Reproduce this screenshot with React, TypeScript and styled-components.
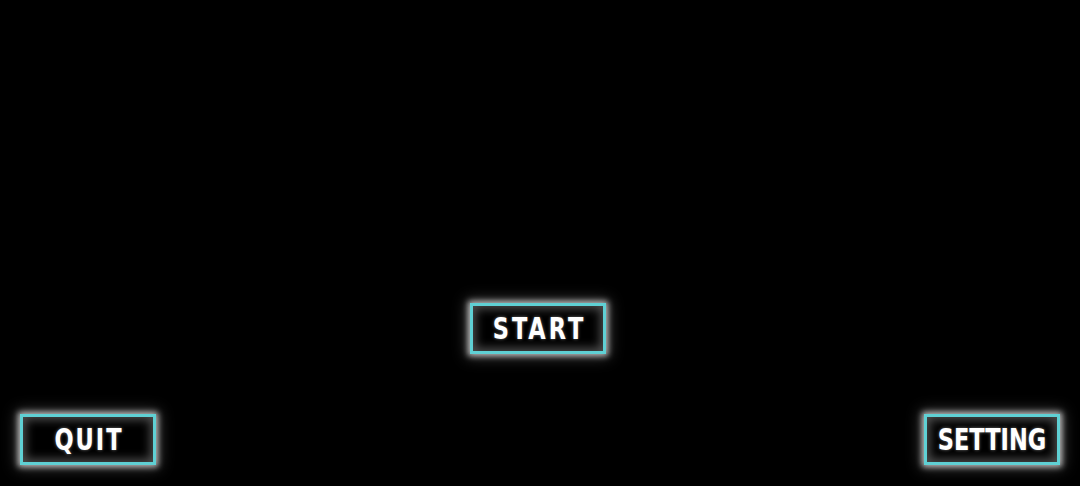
import React from "react";
import styled, { createGlobalStyle } from "styled-components";

const GlobalStyle = createGlobalStyle`
  html, body {
    margin: 0;
    padding: 0;
    background: #000000;
  }
`;

const Screen = styled.div`
  width: 100vw;
  height: 100vh;
  box-sizing: border-box;
  display: flex;
  flex-direction: column;
  justify-content: flex-end;
  gap: 60px;
  padding: 0 20px 21px;
  background: #000000;
`;

const CenterRow = styled.div`
  display: flex;
  justify-content: center;
  padding-right: 4px;
`;

const BottomRow = styled.div`
  display: flex;
  justify-content: space-between;
`;

const MenuButton = styled.button`
  width: 136px;
  height: 51px;
  box-sizing: border-box;
  display: flex;
  align-items: center;
  justify-content: center;
  padding: 0;
  background: #000000;
  border: 3px solid #5fd0d4;
  box-shadow: 0 0 6px 2px rgba(255, 255, 255, 0.7),
    0 0 14px 3px rgba(255, 255, 255, 0.25),
    inset 0 0 10px 3px rgba(255, 255, 255, 0.3);
  cursor: pointer;
`;

const Label = styled.span<{ $spacing: number }>`
  display: inline-block;
  color: #ffffff;
  font-family: "DejaVu Sans Condensed", "DejaVu Sans", sans-serif;
  font-weight: bold;
  font-size: 25px;
  line-height: 1;
  letter-spacing: ${(p) => p.$spacing}px;
  margin-right: -${(p) => p.$spacing}px;
  transform: scaleY(1.2);
  text-shadow: 0 0 3px rgba(255, 255, 255, 0.45);
`;

export default function App() {
  return (
    <>
      <GlobalStyle />
      <Screen>
        <CenterRow>
          <MenuButton>
            <Label $spacing={3}>START</Label>
          </MenuButton>
        </CenterRow>
        <BottomRow>
          <MenuButton>
            <Label $spacing={2}>QUIT</Label>
          </MenuButton>
          <MenuButton>
            <Label $spacing={0}>SETTING</Label>
          </MenuButton>
        </BottomRow>
      </Screen>
    </>
  );
}
